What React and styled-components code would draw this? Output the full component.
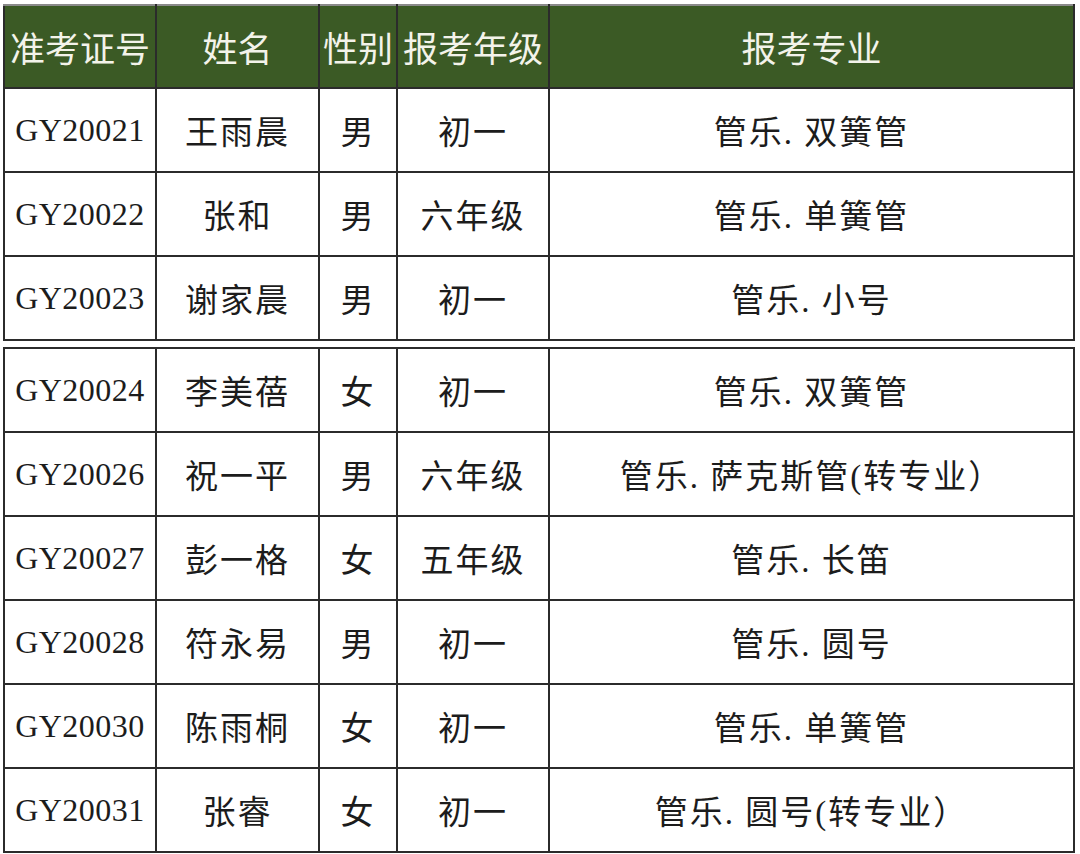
import React from 'react';
import styled, { createGlobalStyle } from 'styled-components';

const GlobalStyle = createGlobalStyle`
  html, body {
    margin: 0;
    padding: 0;
    background: #ffffff;
  }
`;

const Page = styled.div`
  padding: 4px 0 0 3px;
  display: flex;
  flex-direction: column;
  gap: 6px;
`;

const Table = styled.table`
  width: 1070px;
  table-layout: fixed;
  border-collapse: collapse;
  border: 2px solid #4a4a4a;
`;

const HeadCell = styled.th`
  height: 81px;
  padding: 0;
  background: #3b5a25;
  border: 2px solid #2b2b2b;
  border-top-color: #8a8a8a;
  color: #f3f3ea;
  font-family: 'Noto Sans CJK SC', 'Noto Sans', sans-serif;
  font-weight: 400;
  font-size: 35px;
  line-height: 1;
  text-align: center;
  white-space: nowrap;
`;

const Cell = styled.td`
  height: 82px;
  padding: 0;
  border: 2px solid #2b2b2b;
  color: #1c1c1c;
  font-family: 'Liberation Serif', 'Noto Sans CJK SC', serif;
  font-size: ${(p) => (p.latin ? '32px' : '33px')};
  font-weight: 400;
  letter-spacing: ${(p) => (p.latin ? '0.5px' : '2px')};
  text-align: center;
  white-space: nowrap;
`;

const cols = [152, 163, 78, 152, 525];

const first = [
  ['GY20021', '王雨晨', '男', '初一', '管乐. 双簧管'],
  ['GY20022', '张和', '男', '六年级', '管乐. 单簧管'],
  ['GY20023', '谢家晨', '男', '初一', '管乐. 小号'],
];

const second = [
  ['GY20024', '李美蓓', '女', '初一', '管乐. 双簧管'],
  ['GY20026', '祝一平', '男', '六年级', '管乐. 萨克斯管(转专业）'],
  ['GY20027', '彭一格', '女', '五年级', '管乐. 长笛'],
  ['GY20028', '符永易', '男', '初一', '管乐. 圆号'],
  ['GY20030', '陈雨桐', '女', '初一', '管乐. 单簧管'],
  ['GY20031', '张睿', '女', '初一', '管乐. 圆号(转专业）'],
];

const ColGroup = () => (
  <colgroup>
    {cols.map((w, i) => (
      <col key={i} style={{ width: w }} />
    ))}
  </colgroup>
);

const Rows = ({ rows }) =>
  rows.map((r) => (
    <tr key={r[0]}>
      {r.map((v, i) => (
        <Cell key={i} latin={i === 0}>
          {v}
        </Cell>
      ))}
    </tr>
  ));

export default function App() {
  return (
    <Page>
      <GlobalStyle />
      <Table>
        <ColGroup />
        <thead>
          <tr>
            <HeadCell>准考证号</HeadCell>
            <HeadCell>姓名</HeadCell>
            <HeadCell>性别</HeadCell>
            <HeadCell>报考年级</HeadCell>
            <HeadCell>报考专业</HeadCell>
          </tr>
        </thead>
        <tbody>
          <Rows rows={first} />
        </tbody>
      </Table>
      <Table>
        <ColGroup />
        <tbody>
          <Rows rows={second} />
        </tbody>
      </Table>
    </Page>
  );
}
